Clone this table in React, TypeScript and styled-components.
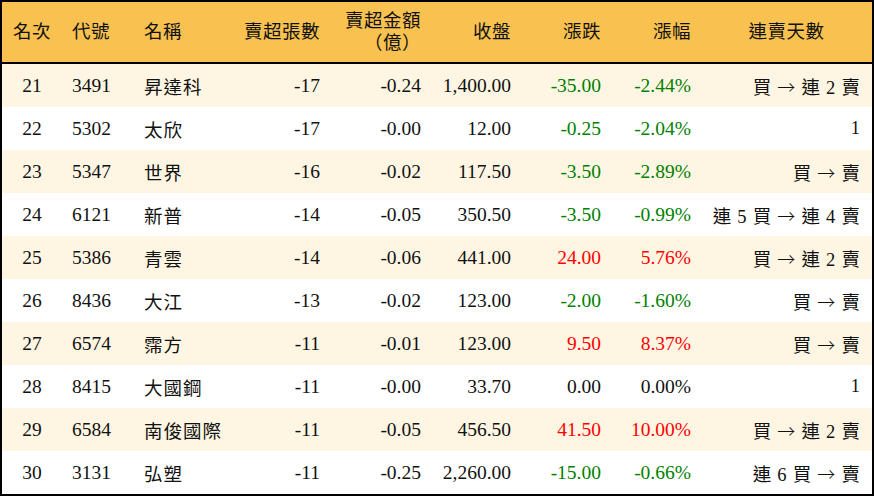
import React from "react";
import styled, { createGlobalStyle } from "styled-components";

const GlobalStyle = createGlobalStyle`
  html, body { margin: 0; padding: 0; background: #ffffff; }
  * { box-sizing: border-box; }
`;

const COLS = "60px 72px 98px 98px 101px 90px 90px 90px 171px";

const Frame = styled.div`
  width: 874px;
  height: 496px;
  border: 2px solid #000;
  background: #fff;
  font-family: "Liberation Serif", "Noto Sans CJK TC", serif;
  font-size: 19.5px;
  color: #111;
  display: flex;
  flex-direction: column;
`;

const HeaderRow = styled.div`
  display: grid;
  grid-template-columns: ${COLS};
  height: 62px;
  background: #f8c150;
  border-bottom: 2px solid #000;
`;

type Align = "left" | "center" | "right";

const HeaderCell = styled.div<{ $align: Align }>`
  display: flex;
  flex-direction: column;
  justify-content: center;
  align-items: ${(p) =>
    p.$align === "left" ? "flex-start" : p.$align === "right" ? "flex-end" : "center"};
  text-align: ${(p) => p.$align};
  padding: 0 ${(p) => (p.$align === "center" ? 0 : 10)}px;
  font-size: 18.5px;
  line-height: 22px;
  letter-spacing: 0.5px;
`;

const WideHeaderCell = styled(HeaderCell)`
  padding: 0 12px;
`;

const Row = styled.div<{ $alt: boolean }>`
  display: grid;
  grid-template-columns: ${COLS};
  height: 43px;
  background: ${(p) => (p.$alt ? "#fef6e3" : "#ffffff")};
`;

type Tone = "up" | "down" | "flat";

const Cell = styled.div<{ $align: Align; $tone?: Tone }>`
  display: flex;
  align-items: center;
  justify-content: ${(p) =>
    p.$align === "left" ? "flex-start" : p.$align === "right" ? "flex-end" : "center"};
  padding: 0 ${(p) => (p.$align === "center" ? 0 : 10)}px;
  white-space: pre;
  color: ${(p) => (p.$tone === "up" ? "#ff0000" : p.$tone === "down" ? "#008000" : "#111")};
`;

const NameCell = styled(Cell)`
  font-size: 18.5px;
  letter-spacing: 1px;
`;

const StreakCell = styled(Cell)`
  padding: 0 12px;
  font-size: 18.5px;
  word-spacing: 1.5px;
`;

const Arrow = styled.span`
  font-family: "Noto Sans CJK TC", sans-serif;
  font-weight: 300;
  font-size: 18px;
`;

type Item = {
  rank: number;
  code: string;
  name: string;
  lots: string;
  amount: string;
  close: string;
  change: string;
  pct: string;
  streak: string;
};

const rows: Item[] = [
  { rank: 21, code: "3491", name: "昇達科", lots: "-17", amount: "-0.24", close: "1,400.00", change: "-35.00", pct: "-2.44%", streak: "買 → 連 2 賣" },
  { rank: 22, code: "5302", name: "太欣", lots: "-17", amount: "-0.00", close: "12.00", change: "-0.25", pct: "-2.04%", streak: "1" },
  { rank: 23, code: "5347", name: "世界", lots: "-16", amount: "-0.02", close: "117.50", change: "-3.50", pct: "-2.89%", streak: "買 → 賣" },
  { rank: 24, code: "6121", name: "新普", lots: "-14", amount: "-0.05", close: "350.50", change: "-3.50", pct: "-0.99%", streak: "連 5 買 → 連 4 賣" },
  { rank: 25, code: "5386", name: "青雲", lots: "-14", amount: "-0.06", close: "441.00", change: "24.00", pct: "5.76%", streak: "買 → 連 2 賣" },
  { rank: 26, code: "8436", name: "大江", lots: "-13", amount: "-0.02", close: "123.00", change: "-2.00", pct: "-1.60%", streak: "買 → 賣" },
  { rank: 27, code: "6574", name: "霈方", lots: "-11", amount: "-0.01", close: "123.00", change: "9.50", pct: "8.37%", streak: "買 → 賣" },
  { rank: 28, code: "8415", name: "大國鋼", lots: "-11", amount: "-0.00", close: "33.70", change: "0.00", pct: "0.00%", streak: "1" },
  { rank: 29, code: "6584", name: "南俊國際", lots: "-11", amount: "-0.05", close: "456.50", change: "41.50", pct: "10.00%", streak: "買 → 連 2 賣" },
  { rank: 30, code: "3131", name: "弘塑", lots: "-11", amount: "-0.25", close: "2,260.00", change: "-15.00", pct: "-0.66%", streak: "連 6 買 → 賣" },
];

const toneOf = (v: string): Tone => {
  const n = parseFloat(v.replace(/[,%]/g, ""));
  if (n > 0) return "up";
  if (n < 0) return "down";
  return "flat";
};

const renderStreak = (s: string) => {
  const parts = s.split("→");
  if (parts.length < 2) return s;
  return (
    <>
      {parts[0]}
      <Arrow>→</Arrow>
      {parts[1]}
    </>
  );
};

export default function App() {
  return (
    <>
      <GlobalStyle />
      <Frame>
        <HeaderRow>
          <HeaderCell $align="center">名次</HeaderCell>
          <HeaderCell $align="left">代號</HeaderCell>
          <HeaderCell $align="left">名稱</HeaderCell>
          <HeaderCell $align="right">賣超張數</HeaderCell>
          <HeaderCell $align="right">
            <span>賣超金額</span>
            <span>（億）</span>
          </HeaderCell>
          <HeaderCell $align="right">收盤</HeaderCell>
          <HeaderCell $align="right">漲跌</HeaderCell>
          <HeaderCell $align="right">漲幅</HeaderCell>
          <WideHeaderCell $align="center">連賣天數</WideHeaderCell>
        </HeaderRow>
        {rows.map((r, i) => (
          <Row key={r.rank} $alt={i % 2 === 0}>
            <Cell $align="center">{r.rank}</Cell>
            <Cell $align="left">{r.code}</Cell>
            <NameCell $align="left">{r.name}</NameCell>
            <Cell $align="right">{r.lots}</Cell>
            <Cell $align="right">{r.amount}</Cell>
            <Cell $align="right">{r.close}</Cell>
            <Cell $align="right" $tone={toneOf(r.change)}>{r.change}</Cell>
            <Cell $align="right" $tone={toneOf(r.pct)}>{r.pct}</Cell>
            <StreakCell $align="right">{renderStreak(r.streak)}</StreakCell>
          </Row>
        ))}
      </Frame>
    </>
  );
}
